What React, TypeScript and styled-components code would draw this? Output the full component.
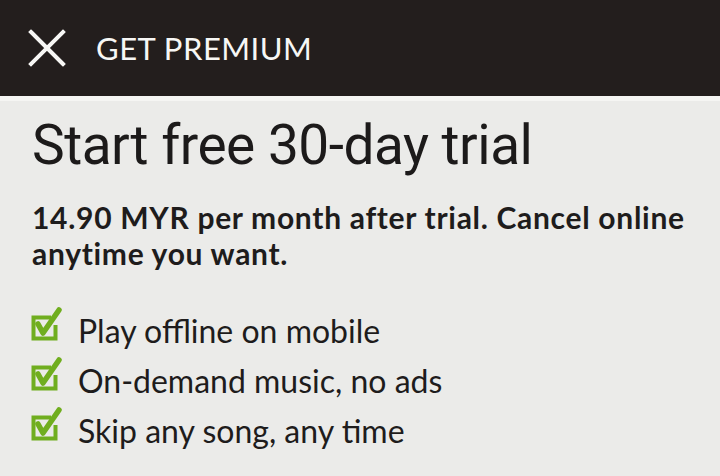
import styled, { createGlobalStyle } from 'styled-components';

const GlobalStyle = createGlobalStyle`
  html, body {
    margin: 0;
    padding: 0;
    background: #ebebe9;
  }
  * {
    box-sizing: border-box;
  }
`;

const features = [
  'Play offline on mobile',
  'On-demand music, no ads',
  'Skip any song, any time',
];

const CloseIcon = () => (
  <svg width="38" height="38" viewBox="0 0 38 38">
    <path
      d="M3 3 L35 35 M35 3 L3 35"
      stroke="#f7f7f5"
      strokeWidth="4"
      strokeLinecap="square"
      fill="none"
    />
  </svg>
);

const CheckIcon = () => (
  <IconBox>
    <svg width="34" height="38" viewBox="0 0 34 38">
      <path
        d="M23 11.5 H5.5 V32.5 H27.5 V19"
        stroke="#70ae1f"
        strokeWidth="4"
        fill="none"
      />
      <path
        d="M10 18 L15 27 L31 4"
        stroke="#70ae1f"
        strokeWidth="5.5"
        strokeLinecap="round"
        strokeLinejoin="round"
        fill="none"
      />
    </svg>
  </IconBox>
);

const App = () => {
  return (
    <Page>
      <GlobalStyle />
      <Header>
        <CloseIcon />
        <HeaderTitle>GET PREMIUM</HeaderTitle>
      </Header>
      <Content>
        <Title>Start free 30-day trial</Title>
        <Price>
          14.90 MYR per month after trial. Cancel online anytime you want.
        </Price>
        <Features>
          {features.map((f) => (
            <Feature key={f}>
              <CheckIcon />
              <span>{f}</span>
            </Feature>
          ))}
        </Features>
      </Content>
    </Page>
  );
};

const Page = styled.div`
  width: 720px;
  height: 476px;
  overflow: hidden;
  background: #ebebe9;
  font-family: Lato, 'Liberation Sans', sans-serif;
`;

const Header = styled.div`
  height: 96px;
  background: #231e1d;
  border-bottom: 5px solid #f5f5f3;
  box-sizing: content-box;
  display: flex;
  align-items: center;
  padding-left: 28px;
  gap: 30px;
`;

const HeaderTitle = styled.h1`
  margin: 0;
  color: #f7f7f5;
  font-size: 31px;
  font-weight: 400;
  letter-spacing: 0.5px;
`;

const Content = styled.div`
  padding: 8px 32px 0;
`;

const Title = styled.h2`
  margin: 0;
  font-family: Roboto, 'Liberation Sans', sans-serif;
  font-weight: 400;
  font-size: 55px;
  line-height: 72px;
  color: #1c1a1a;
  letter-spacing: -0.5px;
`;

const Price = styled.p`
  margin: 18px 0 0;
  font-size: 30px;
  font-weight: 700;
  line-height: 36px;
  letter-spacing: 0.7px;
  color: #1e1c1c;
  max-width: 680px;
`;

const Features = styled.ul`
  list-style: none;
  margin: 41px 0 0;
  padding: 0;
  display: flex;
  flex-direction: column;
  gap: 12px;
`;

const Feature = styled.li`
  display: flex;
  align-items: flex-start;
  gap: 16px;
  height: 38px;
  font-size: 32px;
  line-height: 38px;
  color: #1e1c1c;
  margin-left: -4px;
`;

const IconBox = styled.span`
  display: flex;
  margin-top: -6px;
`;

export default App;
